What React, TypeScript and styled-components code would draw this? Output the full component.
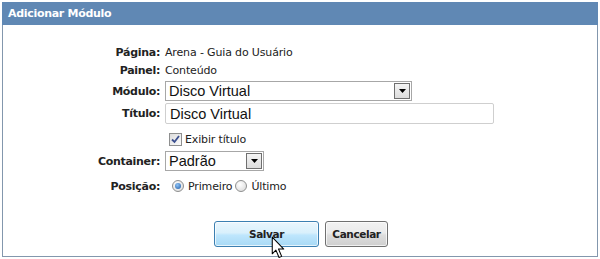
import React from "react";
import styled, { createGlobalStyle } from "styled-components";

const Global = createGlobalStyle`
  html, body { margin: 0; padding: 0; background: #ffffff; }
  body { width: 600px; height: 259px; overflow: hidden; }
`;

const Frame = styled.div`
  position: relative;
  width: 600px;
  height: 259px;
  padding: 2px 2px 2px 2px;
  box-sizing: border-box;
  font-family: "DejaVu Sans", Verdana, sans-serif;
`;

const Panel = styled.div`
  width: 596px;
  height: 255px;
  box-sizing: border-box;
  border: 1px solid #8397ad;
  border-top: none;
  display: flex;
  flex-direction: column;
`;

const Header = styled.div`
  height: 23px;
  margin: 0 -1px;
  background: #6088b4;
  color: #ffffff;
  font-weight: bold;
  font-size: 11px;
  display: flex;
  align-items: center;
  padding-left: 6px;
  letter-spacing: -0.3px;
`;

const Body = styled.div`
  padding-top: 18px;
  display: flex;
  flex-direction: column;
`;

const Row = styled.div<{ $h: number; $mt?: number }>`
  display: grid;
  grid-template-columns: 157px 1fr;
  column-gap: 5px;
  align-items: center;
  height: ${(p) => p.$h}px;
  margin-top: ${(p) => p.$mt ?? 0}px;
`;

const Label = styled.div`
  text-align: right;
  font-weight: bold;
  font-size: 11px;
  letter-spacing: -0.3px;
  color: #222;
`;

const Value = styled.div`
  font-size: 11px;
  letter-spacing: -0.15px;
  color: #222;
`;

const SelectBox = styled.div<{ $w: number }>`
  width: ${(p) => p.$w}px;
  height: 20px;
  box-sizing: border-box;
  border: 1px solid #a7a7a7;
  display: flex;
  align-items: center;
  justify-content: space-between;
  padding: 0 1px 0 3px;
  font-family: "Liberation Sans", Arial, sans-serif;
  font-size: 14.5px;
  color: #111;
  background: #fff;
`;

const ArrowBtn = styled.div`
  width: 16px;
  height: 16px;
  box-sizing: border-box;
  border: 1px solid #6f6f6f;
  background: linear-gradient(#f4f4f4, #dcdcdc);
  display: flex;
  align-items: center;
  justify-content: center;
`;

const TextInput = styled.div`
  width: 329px;
  height: 21px;
  box-sizing: border-box;
  border: 1px solid #cfcfcf;
  border-radius: 2px;
  display: flex;
  align-items: center;
  padding-left: 4px;
  font-family: "Liberation Sans", Arial, sans-serif;
  font-size: 14.5px;
  color: #111;
`;

const Inline = styled.div`
  display: flex;
  align-items: center;
  font-size: 11px;
  letter-spacing: -0.15px;
  color: #222;
`;

const CheckBox = styled.span`
  width: 13px;
  height: 13px;
  box-sizing: border-box;
  border: 1px solid #8e8f8f;
  background: linear-gradient(135deg, #dcdcdc, #fbfbfb);
  display: inline-flex;
  align-items: center;
  justify-content: center;
  margin-left: 4px;
  margin-right: 3px;
`;

const Radio = styled.span<{ $on?: boolean }>`
  width: 12px;
  height: 12px;
  box-sizing: border-box;
  border-radius: 50%;
  border: 1px solid #8e8f8f;
  background: radial-gradient(circle at 40% 35%, #ffffff, #d6d6d6);
  display: inline-flex;
  align-items: center;
  justify-content: center;
  margin: 0 4px 0 ${(p) => (p.$on ? 7 : 3)}px;
  &::after {
    content: "";
    display: ${(p) => (p.$on ? "block" : "none")};
    width: 6px;
    height: 6px;
    border-radius: 50%;
    background: radial-gradient(circle at 40% 35%, #8fc3f5, #1c5aa6);
  }
`;

const Buttons = styled.div`
  display: flex;
  justify-content: flex-start;
  gap: 6px;
  padding-left: 211px;
  margin-top: 26px;
`;

const Button = styled.button<{ $primary?: boolean }>`
  height: 26px;
  box-sizing: border-box;
  border-radius: 3px;
  border: 1px solid ${(p) => (p.$primary ? "#3c7fb1" : "#707070")};
  background: ${(p) =>
    p.$primary
      ? "linear-gradient(#eaf6fd 0%, #d9f0fc 45%, #bee6fd 55%, #a7d9f5 100%)"
      : "linear-gradient(#f2f2f2 0%, #ebebeb 45%, #dddddd 55%, #cfcfcf 100%)"};
  width: ${(p) => (p.$primary ? 105 : 63)}px;
  font-family: "DejaVu Sans", Verdana, sans-serif;
  font-size: 10.5px;
  letter-spacing: -0.4px;
  font-weight: bold;
  color: #222;
  padding: 0;
  box-shadow: inset 0 0 0 1px rgba(255, 255, 255, 0.7);
`;

const Cursor = styled.svg`
  position: absolute;
  left: 271px;
  top: 236px;
`;

const Arrow = () => (
  <svg width="7" height="4" viewBox="0 0 7 4">
    <path d="M0 0 H7 L3.5 4 Z" fill="#000" />
  </svg>
);

export default function App() {
  return (
    <Frame>
      <Global />
      <Panel>
        <Header>Adicionar Módulo</Header>
        <Body>
          <Row $h={18}>
            <Label>Página:</Label>
            <Value>Arena - Guia do Usuário</Value>
          </Row>
          <Row $h={18}>
            <Label>Painel:</Label>
            <Value>Conteúdo</Value>
          </Row>
          <Row $h={20} $mt={2}>
            <Label>Módulo:</Label>
            <SelectBox $w={247}>
              Disco Virtual
              <ArrowBtn>
                <Arrow />
              </ArrowBtn>
            </SelectBox>
          </Row>
          <Row $h={21} $mt={2}>
            <Label>Título:</Label>
            <TextInput>Disco Virtual</TextInput>
          </Row>
          <Row $h={18} $mt={6}>
            <span />
            <Inline>
              <CheckBox>
                <svg width="9" height="9" viewBox="0 0 9 9">
                  <path d="M1 4.5 L3.5 7 L8 1" stroke="#3b4f8f" strokeWidth="1.8" fill="none" />
                </svg>
              </CheckBox>
              Exibir título
            </Inline>
          </Row>
          <Row $h={20} $mt={3}>
            <Label>Container:</Label>
            <SelectBox $w={99}>
              Padrão
              <ArrowBtn>
                <Arrow />
              </ArrowBtn>
            </SelectBox>
          </Row>
          <Row $h={18} $mt={6}>
            <Label>Posição:</Label>
            <Inline>
              <Radio $on />
              Primeiro
              <Radio />
              Último
            </Inline>
          </Row>
          <Buttons>
            <Button $primary>Salvar</Button>
            <Button>Cancelar</Button>
          </Buttons>
        </Body>
      </Panel>
      <Cursor width="14" height="23" viewBox="0 0 13 22">
        <path
          d="M1 1 L1 17 L4.5 13.5 L7.5 20.5 L10 19.5 L7 12.5 L12 12.5 Z"
          fill="#fff"
          stroke="#000"
          strokeWidth="1"
          strokeLinejoin="round"
        />
      </Cursor>
    </Frame>
  );
}
